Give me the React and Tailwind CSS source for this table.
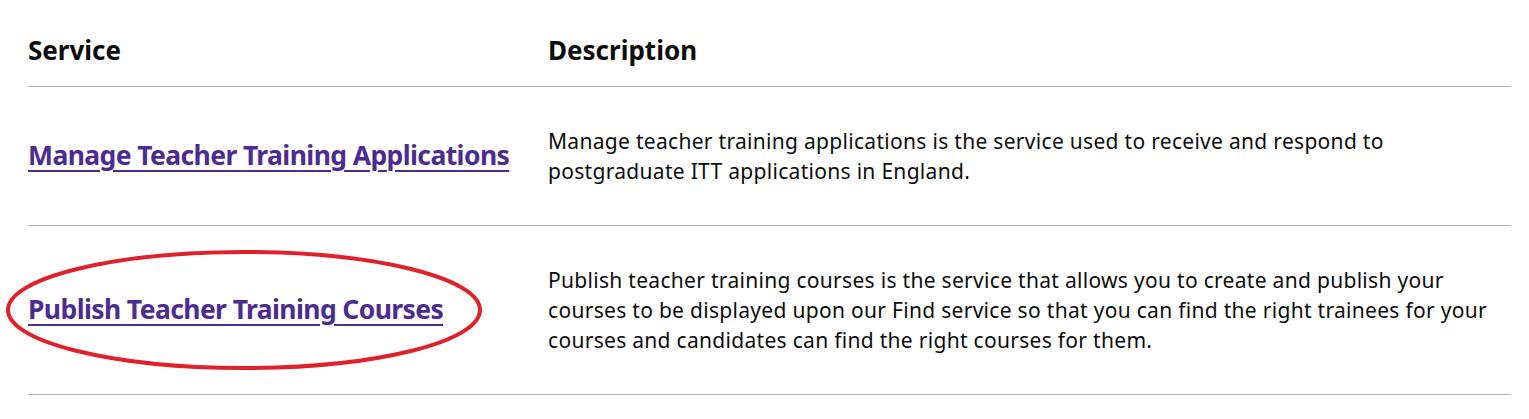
import React from "react";

const rows = [
  {
    name: "Manage Teacher Training Applications",
    desc: "Manage teacher training applications is the service used to receive and respond to postgraduate ITT applications in England.",
  },
  {
    name: "Publish Teacher Training Courses",
    desc: "Publish teacher training courses is the service that allows you to create and publish your courses to be displayed upon our Find service so that you can find the right trainees for your courses and candidates can find the right courses for them.",
    circled: true,
  },
];

export default function App() {
  return (
    <div className="min-h-[419px] bg-white pl-[28px] pr-[18px] font-['Noto_Sans',sans-serif] text-[#0b0c0c]">
      <div className="grid grid-cols-[520px_1fr] border-b border-[#b1b4b6] pt-[33px] pb-[19px] text-[26px] font-bold leading-[34px]">
        <div>Service</div>
        <div>Description</div>
      </div>
      {rows.map((row) => (
        <div
          key={row.name}
          className="grid grid-cols-[520px_1fr] items-center border-b border-[#b1b4b6] py-[39px]"
        >
          <div className="relative">
            {row.circled && (
              <svg
                className="pointer-events-none absolute left-[-24px] top-1/2 -translate-y-1/2"
                width="480"
                height="124"
                viewBox="0 0 480 124"
              >
                <ellipse cx="240" cy="62" rx="236" ry="58" fill="none" stroke="#e0202a" strokeWidth="4" />
              </svg>
            )}
            <a
              href="#"
              className="relative text-[26.5px] font-bold tracking-[-0.6px] text-[#4c2c92] underline decoration-2 underline-offset-[5px]"
            >
              {row.name}
            </a>
          </div>
          <p className="max-w-[948px] text-[21px] leading-[30px] tracking-[0.3px]">{row.desc}</p>
        </div>
      ))}
    </div>
  );
}
